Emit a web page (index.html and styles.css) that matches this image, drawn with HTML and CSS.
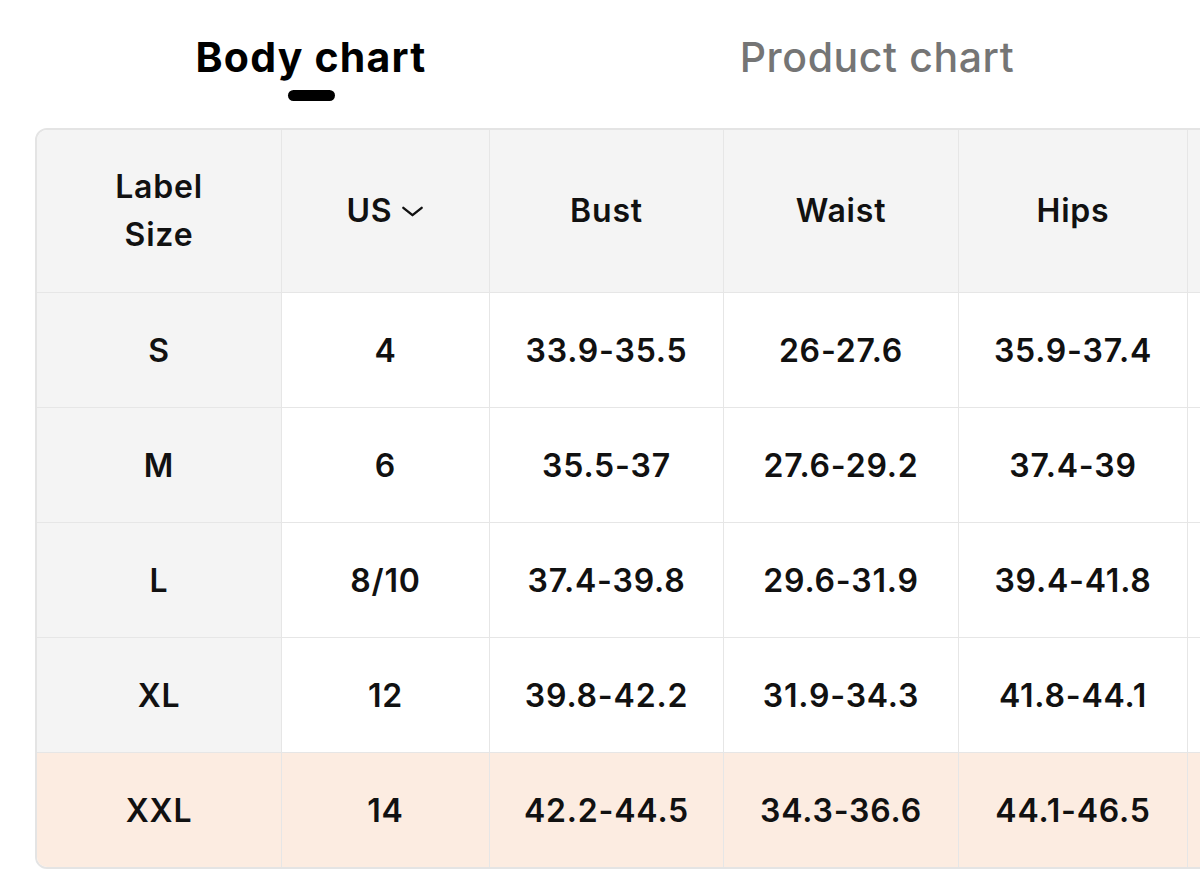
FILE: index.html
```html
<!DOCTYPE html>
<html lang="en">
<head>
<meta charset="utf-8">
<title>Size chart</title>
<link rel="stylesheet" href="styles.css">
</head>
<body>
<div class="page">
  <nav class="tabs">
    <div class="tab tab-active">
      <span class="tab-label">Body chart</span>
      <span class="tab-bar"></span>
    </div>
    <div class="tab">
      <span class="tab-label">Product chart</span>
    </div>
  </nav>
  <div class="table-wrap">
    <table class="chart">
      <colgroup>
        <col class="c1"><col class="c2"><col class="c3"><col class="c4"><col class="c5"><col class="c6">
      </colgroup>
      <thead>
        <tr>
          <th class="first">Label<br>Size</th>
          <th><span class="us">US<svg class="chev" viewBox="0 0 24 12" width="23" height="11"><path d="M2 2 L12 10 L22 2" fill="none" stroke="#111" stroke-width="2.6" stroke-linecap="round" stroke-linejoin="round"/></svg></span></th>
          <th>Bust</th>
          <th>Waist</th>
          <th>Hips</th>
          <th></th>
        </tr>
      </thead>
      <tbody>
        <tr><td class="first">S</td><td>4</td><td>33.9-35.5</td><td>26-27.6</td><td>35.9-37.4</td><td></td></tr>
        <tr><td class="first">M</td><td>6</td><td>35.5-37</td><td>27.6-29.2</td><td>37.4-39</td><td></td></tr>
        <tr><td class="first">L</td><td>8/10</td><td>37.4-39.8</td><td>29.6-31.9</td><td>39.4-41.8</td><td></td></tr>
        <tr><td class="first">XL</td><td>12</td><td>39.8-42.2</td><td>31.9-34.3</td><td>41.8-44.1</td><td></td></tr>
        <tr class="hl"><td class="first">XXL</td><td>14</td><td>42.2-44.5</td><td>34.3-36.6</td><td>44.1-46.5</td><td></td></tr>
      </tbody>
    </table>
  </div>
</div>
</body>
</html>
```
FILE: styles.css
```css
html, body {
  margin: 0;
  padding: 0;
  background: #fff;
}
body {
  width: 1200px;
  height: 874px;
  overflow: hidden;
}
.page {
  display: flex;
  flex-direction: column;
}
.tabs {
  display: flex;
  padding-left: 28px;
  height: 128px;
}
.tab {
  width: 566px;
  display: flex;
  flex-direction: column;
  align-items: center;
  padding-top: 31px;
  box-sizing: border-box;
}
.tab-label {
  font-family: Inter, Roboto, "Liberation Sans", sans-serif;
  font-size: 41px;
  line-height: 52px;
  font-weight: 500;
  letter-spacing: 0.6px;
  color: #757575;
}
.tab-active .tab-label {
  font-weight: 700;
  letter-spacing: 1.2px;
  color: #000;
}
.tab-bar {
  width: 47px;
  height: 11px;
  border-radius: 6px;
  background: #000;
  margin-top: 7px;
}
.table-wrap {
  margin-left: 35px;
  width: 1165px;
  overflow: hidden;
}
.chart {
  border-collapse: separate;
  border-spacing: 0;
  table-layout: fixed;
  width: 1400px;
  border: 2px solid #e4e4e4;
  border-radius: 12px;
  overflow: hidden;
  font-family: Inter, "Noto Sans", sans-serif;
  font-weight: 600;
  font-size: 32px;
  letter-spacing: 0.8px;
  color: #111;
}
.c1 { width: 245px; }
.c2 { width: 208px; }
.c3 { width: 234px; }
.c4 { width: 235px; }
.c5 { width: 229px; }
.c6 { width: 247px; }
.chart th, .chart td {
  text-align: center;
  vertical-align: middle;
  border-right: 1px solid #e6e6e6;
  border-bottom: 1px solid #e6e6e6;
  padding: 0;
}
.chart th {
  height: 162px;
  background: #f4f4f4;
  font-weight: 600;
  line-height: 48px;
}
.chart td {
  height: 114px;
  background: #fff;
}
.chart td.first {
  background: #f4f4f4;
}
.chart tr:last-child td {
  border-bottom: none;
}
.chart tr.hl td {
  background: #fcece1;
}
.us {
  display: inline-flex;
  align-items: center;
  gap: 9px;
}
.chev {
  width: 23px;
  height: 11px;
}
```
